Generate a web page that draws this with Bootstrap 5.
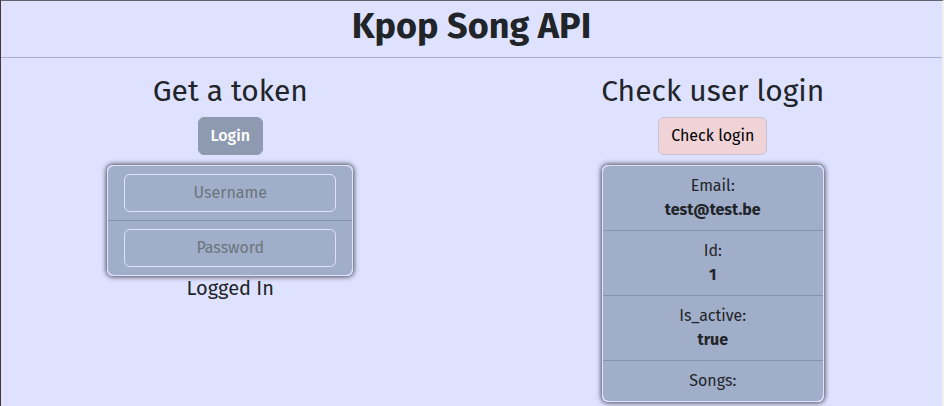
<!DOCTYPE html>
<html lang="en">
<head>
<meta charset="utf-8">
<meta name="viewport" content="width=device-width, initial-scale=1">
<title>Kpop Song API</title>
<link href="https://cdn.jsdelivr.net/npm/bootstrap@5.3.0/dist/css/bootstrap.min.css" rel="stylesheet">
<style>
  body {
    font-family: "Fira Sans", "Open Sans", sans-serif;
    font-size: 16px;
    line-height: 24px;
    color: #212529;
    background: #dee2ff;
    border-top: 1px solid #626270;
    border-left: 1px solid #49323a;
    border-right: 2px solid #f0f0f0;
  }
  .page-title { font-size: 36px; line-height: 50px; font-weight: 700; }
  .page-header { border-bottom: 1px solid #abb0cb; padding-bottom: 6px; }
  .page-content { padding-top: 15px; }
  .section-title { font-size: 30px; line-height: 36px; font-weight: 400; }
  .status-text { font-size: 20px; line-height: 24px; }
  .btn { margin-bottom: 10px; }
  .btn-token { --bs-btn-color: #fff; --bs-btn-bg: #8e9aaf; --bs-btn-border-color: #8e9aaf; --bs-btn-hover-color: #fff; --bs-btn-hover-bg: #7d899e; --bs-btn-font-weight: 500; }
  .btn-check-user { --bs-btn-color: #000; --bs-btn-bg: #efd3d7; --bs-btn-border-color: #cbc0d3; --bs-btn-hover-bg: #e5c3c9; }
  .panel {
    --bs-list-group-bg: #a1aec9;
    --bs-list-group-color: #212529;
    --bs-list-group-border-color: #8594ae;
    border: 1px solid #dee2ff;
    border-radius: 6px;
    box-shadow: 0 0 5px 1px #4a4a58;
    overflow: hidden;
    max-width: 100%;
  }
  .panel-form { width: 246px; }
  .panel-user { width: 222px; }
  .panel .form-control {
    background: transparent;
    border-color: #dee2ff;
  }
  .panel .form-control::placeholder { color: #6c757d; }
</style>
<script src="https://cdn.jsdelivr.net/npm/bootstrap@5.3.0/dist/js/bootstrap.bundle.min.js"></script>
</head>
<body class="min-vh-100 overflow-x-hidden">
<header class="page-header text-center">
  <h1 class="page-title mb-0">Kpop Song API</h1>
</header>
<main class="page-content overflow-hidden pb-1">
  <div class="row text-center">
    <section class="col-6 d-flex flex-column align-items-center">
      <h2 class="section-title mb-2">Get a token</h2>
      <button type="submit" form="login-form" class="btn btn-token">Login</button>
      <form id="login-form" class="panel panel-form list-group list-group-flush" onsubmit="return false">
        <div class="list-group-item">
          <input type="text" class="form-control text-center" placeholder="Username" aria-label="Username">
        </div>
        <div class="list-group-item">
          <input type="password" class="form-control text-center" placeholder="Password" aria-label="Password">
        </div>
      </form>
      <p class="status-text mb-0">Logged In</p>
    </section>
    <section class="col-6 d-flex flex-column align-items-center">
      <h2 class="section-title mb-2">Check user login</h2>
      <button type="button" class="btn btn-check-user">Check login</button>
      <ul class="panel panel-user list-group list-group-flush mb-0">
        <li class="list-group-item">Email:<br><strong>test@test.be</strong></li>
        <li class="list-group-item">Id:<br><strong>1</strong></li>
        <li class="list-group-item">Is_active:<br><strong>true</strong></li>
        <li class="list-group-item">Songs:</li>
      </ul>
    </section>
  </div>
</main>
</body>
</html>
